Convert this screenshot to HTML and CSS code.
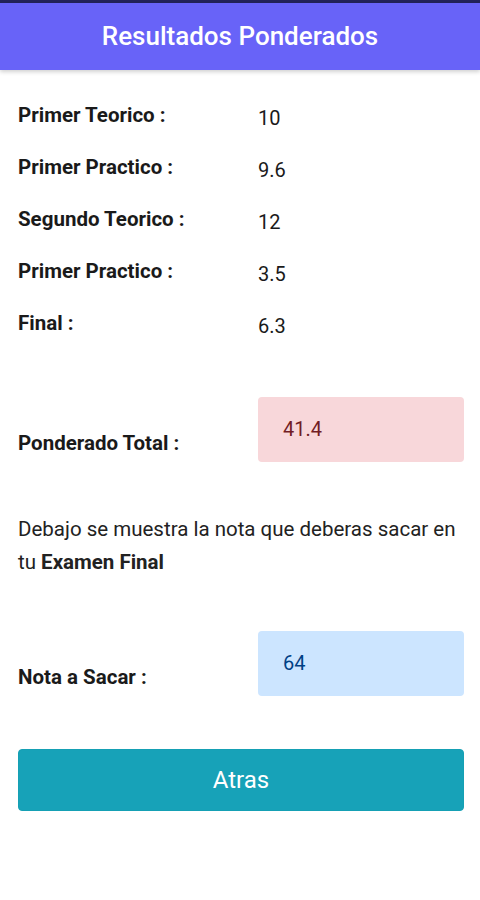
FILE: index.html
```html
<!DOCTYPE html>
<html lang="es">
<head>
<meta charset="utf-8">
<title>Resultados Ponderados</title>
<link rel="stylesheet" href="styles.css">
</head>
<body>
<div class="statusline"></div>
<header class="appbar">Resultados Ponderados</header>
<main class="content">
  <section class="grades">
    <div class="row"><span class="label">Primer Teorico :</span><span class="value">10</span></div>
    <div class="row"><span class="label">Primer Practico :</span><span class="value">9.6</span></div>
    <div class="row"><span class="label">Segundo Teorico :</span><span class="value">12</span></div>
    <div class="row"><span class="label">Primer Practico :</span><span class="value">3.5</span></div>
    <div class="row"><span class="label">Final :</span><span class="value">6.3</span></div>
  </section>
  <div class="result total">
    <span class="label">Ponderado Total :</span>
    <div class="box box-danger">41.4</div>
  </div>
  <p class="note">Debajo se muestra la nota que deberas sacar en tu <b>Examen Final</b></p>
  <div class="result needed">
    <span class="label">Nota a Sacar :</span>
    <div class="box box-info">64</div>
  </div>
  <button class="btn-back">Atras</button>
</main>
</body>
</html>
```
FILE: styles.css
```css
* { box-sizing: border-box; }
html, body { margin: 0; padding: 0; background: #ffffff; }
body {
  width: 480px;
  height: 900px;
  font-family: Roboto, "Noto Sans", sans-serif;
  color: #1a1a1a;
}
.statusline { height: 3px; background: #23235a; }
.appbar {
  height: 67px;
  background: #6863f8;
  color: #ffffff;
  font-size: 26px;
  font-weight: 500;
  display: flex;
  align-items: center;
  justify-content: center;
  padding-bottom: 2px;
  box-shadow: 0 2px 4px rgba(0,0,0,0.18);
}
.content { padding: 0 16px 0 18px; }
.grades { padding-top: 33px; display: flex; flex-direction: column; gap: 27px; }
.row { display: flex; align-items: flex-start; height: 25px; }
.label { font-size: 20.5px; font-weight: 700; width: 240px; flex: none; line-height: 25px; }
.value { font-size: 20px; line-height: 25px; margin-top: 3px; }
.result { display: flex; align-items: flex-end; }
.total { margin-top: 61px; }
.result .label { padding-bottom: 6px; }
.box {
  width: 206px;
  height: 65px;
  border-radius: 4px;
  font-size: 20px;
  padding: 20px 0 0 25px;
  line-height: 25px;
}
.box-danger { background: #f8d7da; color: #721c24; }
.box-info { background: #cce5ff; color: #004085; }
.note {
  margin: 51px 0 0 0;
  font-size: 20.5px;
  line-height: 33px;
  color: #222;
}
.note b { font-weight: 700; }
.needed { margin-top: 52px; }
.btn-back {
  display: block;
  margin-top: 53px;
  width: 446px;
  height: 62px;
  border: 1px solid #15a0b4;
  border-radius: 4px;
  background: #17a2b8;
  color: #ffffff;
  font-family: Roboto, "Noto Sans", sans-serif;
  font-size: 24px;
  padding-bottom: 2px;
}
```
